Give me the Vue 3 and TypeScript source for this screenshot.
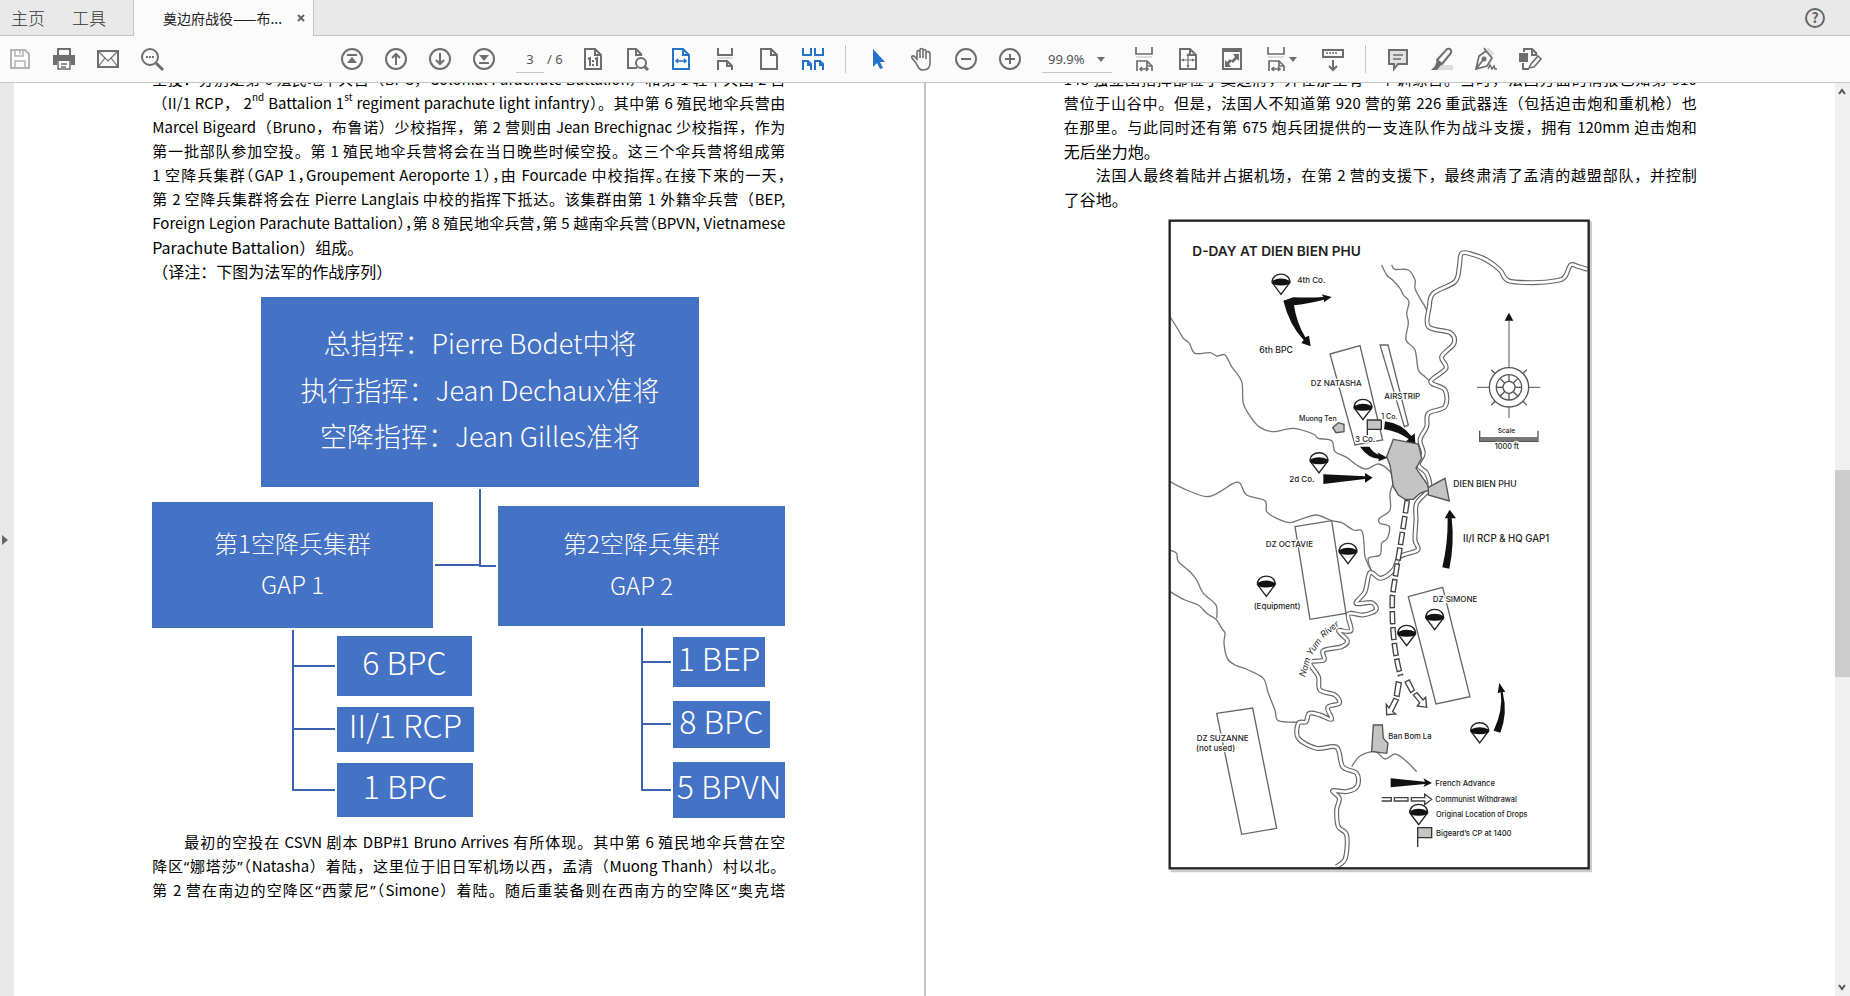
<script setup lang="ts">
import { ref } from 'vue'

type Point = [number, number]

interface Tool { name: string; icon: string; gap?: boolean; tone?: string; menu?: boolean }

const page = ref('3')
const zoom = ref('99.9%')

const ring = '<circle r="10"/>'
const sheet = '<path d="M-8-10H2L8-4V10H-8Z"/><path d="M2-10V-4H8"/>'

const fileTools: Tool[] = [
  { name: '保存', tone: 'faint', icon: '<path d="M-9-9H5L9-5V9H-9Z"/><path d="M-5-9V-3H3V-9M-5 9V2H5V9M0-8V-5" stroke-width="1.5"/>' },
  { name: '打印', icon: '<path d="M-6-4V-10H6V-4" /><path d="M-11-4H11V6H7V2H-7V6H-11Z" fill="currentColor" stroke="none"/><path d="M-6 2V10H6V2M-3 5H3M-3 8H2" stroke-width="1.5"/>' },
  { name: '邮件', icon: '<path d="M-10-8H10V8H-10Z"/><path d="M-10-8 0 2 10-8M-10 8-3-1M10 8 3-1" stroke-width="1.2"/>' },
  { name: '查找', icon: '<circle cx="-2" cy="-2" r="8"/><path d="M4 4 11 11" stroke-width="3"/><path d="M-6-2h2m1 0h2m1 0h2" />' },
]
const pageTools: Tool[] = [
  { name: '第一页', icon: ring + '<path d="M-5-4H5"/><path d="M0-2 5 4H-5Z" fill="currentColor" stroke="none"/>' },
  { name: '上一页', icon: ring + '<path d="M0 6V-5M-4-1 0-5 4-1"/>' },
  { name: '下一页', icon: ring + '<path d="M0-6V5M-4 1 0 5 4 1"/>' },
  { name: '最后一页', icon: ring + '<path d="M-5 4H5"/><path d="M0 2 5-4H-5Z" fill="currentColor" stroke="none"/>' },
]
const viewTools: Tool[] = [
  { name: '实际大小', icon: sheet + '<path d="M-5 0-3-1V7M2 0 4-1V7M0 1V3M0 5V7" stroke-width="2"/>' },
  { name: '查找页面', icon: '<path d="M0 9H-9V-10H-1L5-4M-1-10V-4H5"/><circle cx="4" cy="4" r="5"/><path d="M7 7 11 11" stroke-width="3"/>' },
  { name: '适合宽度', tone: 'active', icon: sheet + '<path d="M-5 2H5M-3 0-5 2-3 4M3 0 5 2 3 4" stroke-width="1.5"/>' },
  { name: '连续滚动', icon: '<path d="M-7-11V-4H7V-11M-7 11V2H2L7 7V11M2 2V7H7"/><path d="M-8-1H8" stroke="#ddd"/>' },
  { name: '单页', icon: sheet },
  { name: '双页滚动', tone: 'active', icon: '<path d="M-10-11V-4H-2V-11M2-11V-4H10V-11M-10 11V2H-5L-2 5V11M-5 2V6H-2M2 11V2H7L10 5V11M7 2V6H10"/>' },
]
const handTools: Tool[] = [
  { name: '选择', tone: 'active', icon: '<path d="M-5-10V8L-1 4 2 10 5 9 2 3H7Z" fill="currentColor" stroke="none"/>' },
  { name: '手形', icon: '<path d="M-6 4-10-1C-11-3-9-4-7-2L-5 0V-7C-5-9-2-9-2-7V-1-9C-2-11 1-11 1-9V-1-8C1-10 4-10 4-8V0-6C4-8 8-8 8-5V4C8 9 5 11 1 11S-4 8-6 4Z" stroke-width="1.6"/>' },
  { name: '缩小', icon: ring + '<path d="M-5 0H5"/>' },
  { name: '放大', icon: ring + '<path d="M-5 0H5M0-5V5"/>' },
]
const fitWidth = '<path d="M-8-12V-5H8V-12M-7 12V2H3L8 7V12M3 2V7H8M-4 10H4M-2 8-4 10-2 12M2 8 4 10 2 12" stroke-width="1.7"/><path d="M-8-2H8" stroke="#ddd"/>'
const fitTools: Tool[] = [
  { name: '适合窗口宽度', icon: fitWidth },
  { name: '适合一页', icon: sheet + '<path d="M0-4V7M-5 1H5M-1-3 0-5 1-3M-1 6 0 8 1 6M-4 0-6 1-4 2M4 0 6 1 4 2" stroke-width="1.2"/>' },
  { name: '全屏', icon: '<path d="M-9-10H9V10H-9Z"/><path d="M-9-8H9" /><path d="M7-5V2L5 0 1 4-1 2 3-2 1-5ZM-7 8V1L-5 3-2 0 0 2-3 5-1 8Z" fill="currentColor" stroke="none"/>' },
  { name: '页面显示', icon: fitWidth, menu: true },
  { name: '工具栏', icon: '<path d="M-10-9H10V-2H-10Z"/><path d="M-7-6h2m1 0h2m1 0h2m1 0h2" stroke-width="1.5"/><path d="M0 1V11M-4 7 0 11 4 7"/>' },
]
const markTools: Tool[] = [
  { name: '注释', icon: '<path d="M-9-9H9V5H0L-4 10V5H-9Z" fill="#e2e2e2"/><path d="M-5-4H5M-5 0H3" stroke-width="1.5"/>' },
  { name: '荧光笔', icon: '<path d="M-5 6H11V11H-8Z" fill="#ddd" stroke="none"/><path d="M-5 1 5-10C8-11 10-9 9-6L0 5Z"/><path d="M-5 1-7 7-11 11H-5L0 5Z" fill="currentColor" stroke="none"/>' },
  { name: '签名', icon: '<path d="M1-10 7-4" stroke="#ddd" stroke-width="4"/><path d="M-10 10-7-3 0-8 6-1 1 7ZM-10 10-3 1M0-8-2-11" stroke-width="1.7"/><circle cx="-2" cy="0" r="1.5" fill="currentColor"/><path d="M2 10 4 6 6 10 8 7 9 10H11" stroke-width="1.5"/>' },
  { name: '编辑', icon: '<path d="M-11-6H-2V3H-11Z" fill="currentColor" stroke="none"/><path d="M-6-7V-10H2L7-5M2-10V-4H7M-7 4V10H-1" /><path d="M-1 9 1 5 8-3 11 0 4 8Z" stroke-width="1.6"/>' },
]
const toolGroups = [
  { id: 'view', tools: viewTools },
  { id: 'hand', tools: handTools },
]
const tailGroups = [
  { id: 'fit', tools: fitTools },
  { id: 'mark', tools: markTools },
]

interface Line { text: string; kind?: string }
const leftTop: Line[] = [
  { text: '空投：分别是第 6 殖民地伞兵营（BPC，Colonial Parachute Battalion）和第 1 轻伞兵团 2 营' },
  { text: '（II/1 RCP， 2<sup>nd</sup> Battalion 1<sup>st</sup> regiment parachute light infantry）。其中第 6 殖民地伞兵营由' },
  { text: 'Marcel Bigeard（Bruno，布鲁诺）少校指挥，第 2 营则由 Jean Brechignac 少校指挥，作为' },
  { text: '第一批部队参加空投。第 1 殖民地伞兵营将会在当日晚些时候空投。这三个伞兵营将组成第' },
  { text: '1 空降兵集群（GAP 1，Groupement Aeroporte 1），由 Fourcade 中校指挥。在接下来的一天，', kind: 'tight' },
  { text: '第 2 空降兵集群将会在 Pierre Langlais 中校的指挥下抵达。该集群由第 1 外籍伞兵营（BEP,' },
  { text: 'Foreign Legion Parachute Battalion），第 8 殖民地伞兵营，第 5 越南伞兵营（BPVN, Vietnamese', kind: 'tight' },
  { text: 'Parachute Battalion）组成。', kind: 'last' },
  { text: '（译注：下图为法军的作战序列）', kind: 'last' },
]
const leftBottom: Line[] = [
  { text: '最初的空投在 CSVN 剧本 DBP#1 Bruno Arrives 有所体现。其中第 6 殖民地伞兵营在空', kind: 'indent' },
  { text: '降区<b>“</b>娜塔莎<b>”</b>（Natasha）着陆，这里位于旧日军机场以西，孟清（Muong Thanh）村以北。' },
  { text: '第 2 营在南边的空降区<b>“</b>西蒙尼<b>”</b>（Simone）着陆。随后重装备则在西南方的空降区<b>“</b>奥克塔' },
]
const rightTop: Line[] = [
  { text: '148 独立团指挥部位于奠边府，并在那里有一个训练营。当时，法国方面的情报已知第 910' },
  { text: '营位于山谷中。但是，法国人不知道第 920 营的第 226 重武器连（包括迫击炮和重机枪）也' },
  { text: '在那里。与此同时还有第 675 炮兵团提供的一支连队作为战斗支援，拥有 120mm 迫击炮和' },
  { text: '无后坐力炮。', kind: 'last' },
  { text: '法国人最终着陆并占据机场，在第 2 营的支援下，最终肃清了孟清的越盟部队，并控制', kind: 'indent' },
  { text: '了谷地。', kind: 'last' },
]

/* Order-of-battle chart */
const boxes = [
  { x: 109, y: 12, w: 438, h: 190, size: 27, lines: [['总指挥：Pierre Bodet中将', 69], ['执行指挥：Jean Dechaux准将', 116], ['空降指挥：Jean Gilles准将', 162]] },
  { x: 0, y: 217, w: 281, h: 126, size: 24, lines: [['第1空降兵集群', 268], ['GAP 1', 309]] },
  { x: 346, y: 221, w: 287, h: 120, size: 24, lines: [['第2空降兵集群', 268], ['GAP 2', 310]] },
  { x: 185, y: 351, w: 135, h: 60, size: 32, lines: [['6 BPC', 390]] },
  { x: 185, y: 422, w: 137, h: 45, size: 32, lines: [['II/1 RCP', 453]] },
  { x: 185, y: 478, w: 136, h: 54, size: 32, lines: [['1 BPC', 514]] },
  { x: 521, y: 352, w: 92, h: 50, size: 32, lines: [['1 BEP', 386]] },
  { x: 521, y: 416, w: 97, h: 47, size: 32, lines: [['8 BPC', 449]] },
  { x: 521, y: 477, w: 112, h: 56, size: 32, lines: [['5 BPVN', 514]] },
] as { x: number; y: number; w: number; h: number; size: number; lines: [string, number][] }[]

/* Smooth curve through a list of points */
function curve(raw: string): string {
  const p = raw.split(' ').map(s => s.split(',').map(Number) as Point)
  let d = `M${p[0][0]},${p[0][1]}`
  for (let i = 0; i < p.length - 1; i++) {
    const a = p[i - 1] ?? p[i], b = p[i], c = p[i + 1], e = p[i + 2] ?? c
    d += `C${b[0] + (c[0] - a[0]) / 6},${b[1] + (c[1] - a[1]) / 6} ${c[0] - (e[0] - b[0]) / 6},${c[1] - (e[1] - b[1]) / 6} ${c[0]},${c[1]}`
  }
  return d
}

const river = curve('1283,178 1255,170 1232,165 1215,200 1190,212 1120,218 1045,212 1020,180 980,150 940,134 905,130 898,170 885,215 820,250 808,290 805,350 870,368 882,400 845,440 858,475 812,515 855,540 855,590 805,610 800,650 780,690 790,730 775,765 800,790 808,835 770,880 768,930 765,990 773,1020 720,1040 700,1080 662,1105 630,1088 615,1145 588,1180 635,1178 648,1200 610,1215 565,1212 573,1262 535,1262 562,1292 545,1310 490,1322 492,1350 450,1358 475,1400 480,1440 525,1455 538,1480 503,1492 515,1528 480,1515 448,1510 438,1535 415,1540 415,1585 470,1615 530,1612 548,1670 590,1690 592,1728 560,1745 518,1742 538,1765 530,1800 535,1850 560,1875 556,1945 530,1970')
const streams = [
  '665,165 680,195 700,212 720,235 730,255 747,275 740,310 745,340 738,390 765,420 775,480 795,500 812,515',
  '695,165 705,178 745,180 765,210 765,235 780,265 795,290 805,315',
  '30,320 55,360 70,385 88,400 105,430 150,428 170,438 195,435 215,470 245,515 250,580 275,625 300,652 340,665 400,655 460,672 475,685 515,692 525,725 560,742 590,765 620,777 655,762 690,785 700,815 690,850 690,900 658,925 660,940 688,950 682,985 665,1000 660,1035 625,1045 635,1085',
  '30,815 80,840 140,860 180,845 220,820 240,820 260,855 315,872 320,905 350,925 390,938 430,925 470,915 515,932 545,938 580,960 605,962 612,1000 615,1040 632,1080',
  '30,1020 50,1030 55,1055 90,1085 110,1110 130,1150 168,1185 170,1225',
  '30,1145 75,1170 115,1185 140,1210 168,1228 185,1255 195,1270 192,1300 202,1345 225,1365 265,1380 310,1405 325,1450 345,1500 355,1532 415,1537',
  '575,1670 600,1638 645,1625 675,1647 705,1632 735,1650 770,1685',
].map(curve)

const zones = ['510,432 600,407 668,690 585,705', '660,405 684,405 745,645 733,650', '405,950 515,932 558,1210 450,1228', '745,1160 848,1132 930,1460 828,1482', '170,1510 278,1494 350,1855 245,1873']
const towns = ['700,688 775,702 785,745 768,775 800,820 808,840 780,850 760,868 735,868 715,855 700,830 690,765 680,740', '805,832 855,805 868,873 805,855', '518,653 535,638 552,643 552,665 528,668', '640,1545 667,1545 670,1585 684,1600 680,1630 635,1624']
const drops: Point[] = [[363, 214], [609, 590], [477, 750], [564, 1022], [319, 1120], [824, 1220], [740, 1268], [959, 1560], [776, 1805]]
const arrows = [
  'M370 272 400 262Q450 264 490 261L485 253 515 261 492 277 492 269Q440 282 402 286Q410 340 436 382L447 377 452 409 424 399 431 390Q388 345 370 272Z',
  'M675 634Q725 640 754 678L764 670 766 700 738 694 746 687Q710 663 672 658Z',
  'M600 710H628Q640 728 656 734L652 727 682 743 656 754 656 746Q625 745 600 710Z',
  'M490 793V822L615 807V818L638 803 615 789V799Z',
  'M847 1072 868 1076Q884 1000 875 925L888 925 869 899 854 925 863 925Q864 1000 847 1072Z',
  'M1001 1562 1021 1568Q1044 1510 1028 1446L1036 1446 1018 1419 1013 1450 1022 1447Q1030 1500 1001 1562Z',
  'M692 1705V1732L795 1722 790 1731 816 1719 790 1705 795 1715Z',
]
const labels: { t: string; x: number; y: number; s: number; b?: boolean }[] = [
  { t: 'D-DAY AT DIEN BIEN PHU', x: 97, y: 138, s: 41, b: true },
  { t: '4th Co.', x: 412, y: 218, s: 24 }, { t: '6th BPC', x: 298, y: 428, s: 26 },
  { t: 'DZ NATASHA', x: 452, y: 528, s: 24 }, { t: 'AIRSTRIP', x: 673, y: 566, s: 24 },
  { t: 'Muong Ten', x: 417, y: 633, s: 21 }, { t: '1 Co.', x: 664, y: 628, s: 21 }, { t: '3 Co.', x: 585, y: 696, s: 24 },
  { t: '2d Co.', x: 388, y: 816, s: 24 }, { t: 'DIEN BIEN PHU', x: 880, y: 832, s: 26 },
  { t: 'DZ OCTAVIE', x: 317, y: 1010, s: 24 }, { t: '(Equipment)', x: 281, y: 1196, s: 24 },
  { t: 'II/I RCP & HQ GAP1', x: 909, y: 995, s: 29 }, { t: 'DZ SIMONE', x: 818, y: 1176, s: 24 },
  { t: 'DZ SUZANNE', x: 110, y: 1594, s: 24 }, { t: '(not used)', x: 108, y: 1624, s: 24 },
  { t: 'Ban Bom La', x: 685, y: 1586, s: 23 }, { t: 'French Advance', x: 826, y: 1729, s: 23 },
  { t: 'Communist Withdrawal', x: 826, y: 1775, s: 22 }, { t: 'Original Location of Drops', x: 828, y: 1822, s: 22 },
  { t: 'Bigeard’s CP at 1400', x: 828, y: 1877, s: 23 }, { t: 'Scale', x: 1013, y: 670, s: 20 }, { t: '1000 ft', x: 1004, y: 717, s: 22 },
]
const spokes = [0, 45, 90, 135, 180, 225, 270, 315]
</script>

<template>
  <div class="app">
    <header class="tabs">
      <button class="home">主页</button>
      <button class="home">工具</button>
      <div class="tab"><span>奠边府战役——布...</span><button class="close" aria-label="关闭"><svg viewBox="0 0 8 8" width="8" height="8"><path d="M1 1 7 7M7 1 1 7" stroke="#666" stroke-width="2" /></svg></button></div>
      <button class="help" aria-label="帮助">
        <svg viewBox="-11 -11 22 22" width="22" height="22"><circle r="9" fill="none" stroke="#666" stroke-width="2" /><text y="5" text-anchor="middle" font-size="14" font-weight="700" fill="#666">?</text></svg>
      </button>
    </header>

    <nav class="toolbar">
      <div class="group">
        <button v-for="t in fileTools" :key="t.name" class="tool" :class="t.tone" :aria-label="t.name"><svg viewBox="-13 -13 26 26" v-html="t.icon" /></button>
      </div>
      <div class="group pages">
        <button v-for="t in pageTools" :key="t.name" class="tool" :aria-label="t.name"><svg viewBox="-13 -13 26 26" v-html="t.icon" /></button>
      </div>
      <input v-model="page" class="page-no" aria-label="页码"><span class="total">/ 6</span>
      <div v-for="g in toolGroups" :key="g.id" class="group" :class="g.id">
        <button v-for="t in g.tools" :key="t.name" class="tool" :class="t.tone" :aria-label="t.name"><svg viewBox="-13 -13 26 26" v-html="t.icon" /></button>
      </div>
      <div class="zoom">
        <select v-model="zoom" aria-label="缩放"><option>99.9%</option><option>100%</option></select>
        <i class="caret" />
      </div>
      <div v-for="g in tailGroups" :key="g.id" class="group" :class="g.id">
        <button v-for="t in g.tools" :key="t.name" class="tool" :aria-label="t.name"><svg viewBox="-13 -13 26 26" v-html="t.icon" /><i v-if="t.menu" class="caret" /></button>
      </div>
    </nav>

    <main class="viewer">
      <button class="pane-toggle" aria-label="展开窗格"><i /></button>
      <section class="sheet">
        <article class="column">
          <p v-for="l in leftTop" :key="l.text" :class="l.kind" v-html="l.text" />
          <svg class="chart" viewBox="0 0 633 545">
            <path d="M328 204V281M283 280H328M327 281H344M141 345V505H183M141 381H183M141 444H183M490 343V505H519M490 377H519M490 439H519" fill="none" stroke="#3b62ae" stroke-width="2" />
            <g v-for="b in boxes" :key="b.lines[0][0]">
              <rect :x="b.x" :y="b.y" :width="b.w" :height="b.h" fill="#4472c4" />
              <text v-for="l in b.lines" :key="l[0]" :x="b.x + b.w / 2" :y="l[1]" :font-size="b.size" text-anchor="middle">{{ l[0] }}</text>
            </g>
          </svg>
          <p v-for="l in leftBottom" :key="l.text" :class="l.kind" v-html="l.text" />
        </article>
      </section>
      <div class="divider" />
      <section class="sheet">
        <article class="column">
          <p v-for="l in rightTop" :key="l.text" :class="l.kind">{{ l.text }}</p>
          <svg class="map" viewBox="0 9 1320 1980">
            <path d="M1292 34V1983H32" fill="none" stroke="#ccc" stroke-width="8" />
            <g fill="none" stroke="#777" stroke-width="4">
              <path v-for="s in streams" :key="s" :d="s" />
              <path :d="river" stroke="#666" stroke-width="15" />
              <path :d="river" stroke="#fff" stroke-width="8" />
              <polygon v-for="z in zones" :key="z" :points="z" stroke="#666" />
            </g>
            <polygon v-for="t in towns" :key="t" :points="t" fill="#c4c4c4" stroke="#555" stroke-width="4" />
            <g fill="#c4c4c4" stroke="#333" stroke-width="4">
              <path d="M622 682V630H664V658H622" /><path d="M773 1911V1853H815V1883H773" />
            </g>
            <g fill="none">
              <path d="M742 870Q724 990 714 1050T697 1160Q694 1300 722 1398" stroke="#444" stroke-width="17" stroke-dasharray="40 8" />
              <path d="M742 870Q724 990 714 1050T697 1160Q694 1300 722 1398" stroke="#fff" stroke-width="9" stroke-dasharray="32 16" stroke-dashoffset="-4" />
              <g fill="#fff" stroke="#444" stroke-width="4">
                <path d="M709 1415 724 1419 717 1460 703 1456ZM702 1465 715 1470 698 1505 707 1512 680 1514 679 1483 687 1494Z" />
                <path d="M735 1416 748 1410 763 1440 752 1448ZM760 1455 771 1448 789 1470 797 1462 800 1492 772 1488 779 1478Z" />
                <path d="M665 1763H694V1773H665M703 1763H744V1773H703ZM754 1763H794V1752L815 1768 794 1784V1773H754Z" />
              </g>
            </g>
            <path v-for="a in arrows" :key="a" :d="a" fill="#111" />
            <g v-for="d in drops" :key="d.join()" :transform="`translate(${d[0]} ${d[1]})`" stroke="#222" stroke-width="4">
              <path d="M-27 3C-27-30 27-30 27 3L0 39Z" fill="#fff" />
              <path d="M-26-2Q0-15 26-2V8Q0 17-26 8Z" fill="#111" stroke="none" />
            </g>
            <g transform="translate(1047 532)" fill="none" stroke="#555" stroke-width="4">
              <circle r="59" /><circle r="38" /><circle r="18" />
              <path d="M0-60V-200M-96 0H-60M60 0H94M0 60V92" stroke-width="3" />
              <path v-for="a in spokes" :key="a" d="M0-18V-38" :transform="`rotate(${a})`" />
              <path v-for="a in [45, 135, 225, 315]" :key="'t' + a" d="M0-59V-75" :transform="`rotate(${a})`" />
              <path d="M0-224 13-200H-13Z" fill="#111" stroke="none" />
            </g>
            <path d="M959 662V694H1134V662" fill="none" stroke="#555" stroke-width="4" />
            <path d="M959 687H1134" stroke="#777" stroke-width="12" />
            <g class="labels">
              <text v-for="l in labels" :key="l.t" :x="l.x" :y="l.y" :font-size="l.s" :font-weight="l.b ? 600 : 500">{{ l.t }}</text>
              <text transform="translate(434 1402) rotate(-72)" font-size="26" font-style="italic">Nam</text>
              <text transform="translate(454 1338) rotate(-55)" font-size="26" font-style="italic">Yum</text>
              <text transform="translate(490 1284) rotate(-38)" font-size="26" font-style="italic">River</text>
            </g>
            <rect x="29" y="32" width="1257" height="1943" fill="none" stroke="#222" stroke-width="7" />
          </svg>
        </article>
      </section>
      <div class="scrollbar">
        <svg viewBox="0 0 15 15"><path d="M4 10 7 6 10 10" /></svg>
        <div class="track"><div class="thumb" /></div>
        <svg viewBox="0 0 15 15"><path d="M4 5 7 9 10 5" /></svg>
      </div>
    </main>
  </div>
</template>

<style>
body { margin: 0; }
</style>

<style scoped>
.app { display: flex; flex-direction: column; height: 100vh; background: #fff; color: #000; font-family: "Noto Sans CJK SC", sans-serif; }
button { padding: 0; border: 0; background: none; font: inherit; color: inherit; }
.tabs { display: flex; box-sizing: border-box; height: 36px; flex: none; background: #e9e9e9; border-bottom: 1px solid #c6c6c6; color: #333; }
.home { width: 61px; padding-left: 11px; text-align: left; font-size: 17px; font-weight: 300; }
.tab { display: flex; align-items: center; justify-content: space-between; box-sizing: border-box; width: 181px; height: 36px; margin-left: 11px; padding: 0 8px 0 29px; background: #fbfbfb; border: solid #c6c6c6; border-width: 0 1px; font-size: 14px; color: #222; white-space: nowrap; }
.close { display: flex; }
.help { margin-left: auto; margin-right: 24px; display: flex; align-items: center; }
.toolbar { display: flex; align-items: center; box-sizing: border-box; height: 47px; flex: none; padding-left: 6px; background: #fbfbfb; border-bottom: 1px solid #c6c6c6; color: #6e6e6e; }
.group { display: flex; gap: 16px; }
.tool { position: relative; display: flex; justify-content: center; width: 28px; height: 28px; align-items: center; }
.tool svg { width: 26px; height: 26px; fill: none; stroke: currentColor; stroke-width: 2; overflow: visible; }
.faint { color: #b4b4b4; }
.active { color: #2273c9; }
.pages { margin-left: 172px; }
.page-no { box-sizing: border-box; width: 28px; height: 28px; margin-left: 18px; padding: 0; border: 0; border-bottom: 1px solid #c6c6c6; background: none; text-align: center; font: 13px "Noto Sans", sans-serif; color: #555; }
.total { width: 32px; margin-left: 3px; font: 13px "Noto Sans", sans-serif; color: #555; }
.hand { margin-left: 18px; padding-left: 18px; border-left: 1px solid #c6c6c6; }
.zoom { position: relative; margin-left: 18px; width: 70px; }
.zoom select { width: 70px; height: 28px; padding: 0 0 0 6px; border: 0; border-bottom: 1px solid #c6c6c6; appearance: none; background: none; font: 13px "Noto Sans", sans-serif; color: #555; }
.caret { position: absolute; border: 4px solid transparent; border-top: 5px solid #6e6e6e; border-bottom: 0; }
.zoom .caret { right: 7px; top: 12px; }
.tool .caret { left: 27px; top: 12px; }
.fit { margin-left: 18px; }
.fit .tool:last-child { margin-left: 13px; }
.mark { margin-left: 18px; padding-left: 18px; border-left: 1px solid #c6c6c6; }
.viewer { display: flex; flex: 1; min-height: 0; overflow: hidden; }
.pane-toggle { flex: none; display: flex; align-items: center; width: 14px; background: #e9e9e9; }
.pane-toggle i { margin-left: 2px; border: 5px solid transparent; border-left: 6px solid #666; border-right: 0; }
.sheet { flex: 1; min-width: 0; display: flex; justify-content: center; overflow: hidden; }
.column { width: 633px; margin-top: -16px; }
.column p { height: 24px; margin: 0; font-size: 15px; line-height: 24px; white-space: nowrap; text-align: justify; text-align-last: justify; }
.column .tight { font-feature-settings: "halt"; }
.column .last { font-size: 16px; text-align-last: left; }
.column .indent { padding-left: 32px; }
.column :deep(sup) { font-size: 10px; line-height: 0; vertical-align: 8px; }
.column :deep(b) { font-family: "Noto Sans", sans-serif; font-weight: 400; line-height: 0; }
.chart { display: block; width: 100%; margin-top: 2px; }
.chart text { fill: #fff; font-weight: 300; }
.map { display: block; width: 440px; margin: 2px auto 0; }
.labels text { font-family: Inter, sans-serif; fill: #222; paint-order: stroke; stroke: #fff; stroke-width: 8px; }
.divider { flex: none; width: 2px; background: #c4c4c4; }
.scrollbar { flex: none; display: flex; flex-direction: column; width: 15px; background: #f0f0f0; }
.scrollbar svg { width: 15px; height: 17px; fill: none; stroke: #555; stroke-width: 2; }
.track { flex: 1; display: flex; flex-direction: column; }
.track::before { content: ""; flex: 370; }
.track::after { content: ""; flex: 302; }
.thumb { flex: 207; background: #cdcdcd; }
</style>
